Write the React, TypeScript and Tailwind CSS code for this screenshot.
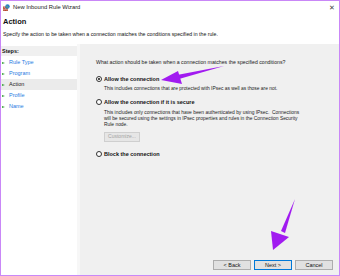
import React from "react";

const steps = [
  { label: "Rule Type", active: false },
  { label: "Program", active: false },
  { label: "Action", active: true },
  { label: "Profile", active: false },
  { label: "Name", active: false },
];

const Radio = ({ checked = false }: { checked?: boolean }) => (
  <span className="w-[6px] h-[6px] rounded-full border border-[#333] bg-white flex items-center justify-center shrink-0">
    {checked && <span className="w-[2px] h-[2px] rounded-full bg-[#111]"></span>}
  </span>
);

const FirewallIcon = () => (
  <svg width="7" height="7" viewBox="0 0 14 14">
    <rect x="0" y="5" width="10" height="9" fill="#b5452c" />
    <path d="M0 8h10M0 11h10M3 5v3M7 5v3M5 8v3M2 11v3M8 11v3" stroke="#e8d2c8" strokeWidth="0.8" />
    <circle cx="9" cy="5" r="4.5" fill="#2d7fc9" />
    <path d="M6 4c1 1 2 0 3 1s0 2 1 3" stroke="#6bbf4e" strokeWidth="1.5" fill="none" />
  </svg>
);

const Btn = ({ children, primary = false }: { children: React.ReactNode; primary?: boolean }) => (
  <div
    className={`w-[38px] h-[10px] flex items-center justify-center bg-[#e1e1e1] border text-[5.5px] text-[#111] ${
      primary ? "border-[#0078d7]" : "border-[#adadad]"
    }`}
  >
    {children}
  </div>
);

export default function App() {
  return (
    <div
      className="relative w-[340px] h-[276px] border border-[#c987f7] bg-white flex flex-col overflow-hidden text-[#111]"
      style={{ fontFamily: '"Liberation Sans", Arial, sans-serif' }}
    >
      {/* title bar */}
      <div className="h-[13px] flex items-center justify-between pl-[2px] pr-[4px]">
        <div className="flex items-center gap-[3px]">
          <FirewallIcon />
          <span className="text-[5.8px] text-[#222]">New Inbound Rule Wizard</span>
        </div>
        <span className="text-[7px] text-[#444] leading-none">✕</span>
      </div>

      {/* header */}
      <div className="h-[30px] pl-[2px] pt-[3px]">
        <div className="text-[7.5px] font-bold leading-[10px]">Action</div>
        <div className="text-[5.2px] mt-[3px] leading-[8px]">
          Specify the action to be taken when a connection matches the conditions specified in the rule.
        </div>
      </div>

      {/* main */}
      <div className="flex-1 flex">
        <div className="w-[76px] bg-white flex flex-col pt-[2px]">
          <div className="h-[10px] bg-[#f0f0f0] flex items-center pl-[1px] text-[5.5px] font-bold">Steps:</div>
          <ul className="mt-[1px]">
            {steps.map((s) => (
              <li
                key={s.label}
                className={`h-[11px] flex items-center gap-[4px] pl-[1px] text-[5.5px] ${
                  s.active ? "bg-[#ebebeb] text-[#222]" : "text-[#2a7ae2]"
                }`}
              >
                <span className="w-0 h-0 border-y-[1.5px] border-y-transparent border-l-[3px] border-l-[#3aa03a]"></span>
                {s.label}
              </li>
            ))}
          </ul>
        </div>
        <div className="w-[3px] bg-[#f7f7f7]"></div>
        <div className="flex-1 bg-[#f0f0f0] flex flex-col pl-[16px] pr-[6px] pt-[15px] pb-[5px]">
          <div className="text-[5.2px] leading-[7px] text-[#222]">
            What action should be taken when a connection matches the specified conditions?
          </div>

          <div className="mt-[9px] flex items-center gap-[2px]">
            <Radio checked />
            <span className="text-[5.5px] font-bold">Allow the connection</span>
          </div>
          <div className="pl-[8px] mt-[3px] text-[4.9px] leading-[6px] text-[#222]">
            This includes connections that are protected with IPsec as well as those are not.
          </div>

          <div className="mt-[6px] flex items-center gap-[2px]">
            <Radio />
            <span className="text-[5.5px] font-bold">Allow the connection if it is secure</span>
          </div>
          <div className="pl-[8px] mt-[3px] text-[4.9px] leading-[6px] text-[#222]">
            This includes only connections that have been authenticated by using IPsec.&nbsp; Connections
            <br />
            will be secured using the settings in IPsec properties and rules in the Connection Security
            <br />
            Rule node.
          </div>
          <div className="ml-[8px] mt-[4px] w-[36px] h-[10px] bg-[#e6e6e6] border border-[#cfcfcf] flex items-center justify-center text-[5px] text-[#a3a3a3]">
            Customize...
          </div>

          <div className="mt-[8px] flex items-center gap-[2px]">
            <Radio />
            <span className="text-[5.5px] font-bold">Block the connection</span>
          </div>

          <div className="mt-auto flex justify-end gap-[3px]">
            <Btn>&lt; Back</Btn>
            <Btn primary>Next &gt;</Btn>
            <Btn>Cancel</Btn>
          </div>
        </div>
      </div>

      {/* annotation arrows */}
      <svg className="absolute inset-0 pointer-events-none" width="340" height="276" viewBox="0 0 340 276">
        <polygon points="223,65 178,78 176,74" fill="#a11bf0" />
        <polygon points="160,79 177,70 181,83" fill="#a11bf0" />
        <polygon points="294,198 284,232 280,230" fill="#a11bf0" />
        <polygon points="272,249 270,230 288,236" fill="#a11bf0" />
      </svg>
    </div>
  );
}
